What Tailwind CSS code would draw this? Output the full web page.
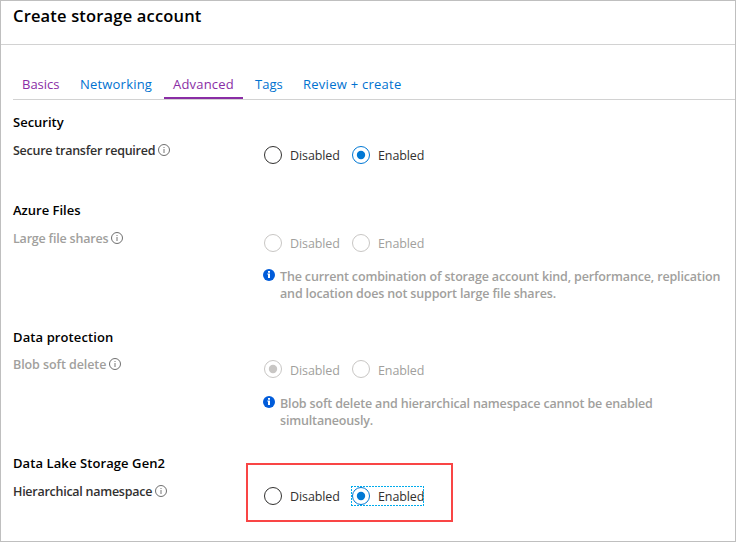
<!DOCTYPE html>
<html lang="en"><head><meta charset="utf-8"><title>Create storage account</title>
<script src="https://cdn.jsdelivr.net/npm/@tailwindcss/browser@4"></script></head>
<body class="bg-white">
<svg class="hidden"><defs>
<symbol id="info" viewBox="0 0 12 12"><circle cx="6" cy="6" r="5.5" fill="none" stroke="#555" stroke-width=".85"/><path d="M6 5v4M6 3v1" stroke="#666" stroke-width=".9"/></symbol>
<symbol id="notice" viewBox="0 0 12 12"><circle cx="6" cy="6" r="6" fill="#015cda"/><path d="M5 2h2v1.8H5zM4.3 4.6H7V9H5V5.6h-.7z" fill="#fff"/></symbol>
<symbol id="off" viewBox="0 0 18 18"><circle cx="9" cy="9" r="8.5" fill="none" stroke="currentColor"/></symbol>
<symbol id="on" viewBox="0 0 18 18"><circle cx="9" cy="9" r="8.5" fill="none" stroke="currentColor"/><circle cx="9" cy="9" r="4.2" fill="currentColor"/></symbol>
</defs></svg>
<main class="flex h-[542px] w-[736px] flex-col border border-[#bfbfbf] font-['Open_Sans','Noto_Sans',sans-serif] text-[12.5px] leading-[18px] whitespace-nowrap text-[#323130]">
<header class="flex h-[44px] shrink-0 items-start border-b border-[#d2d2d2] pt-[3px] pl-3"><h1 class="text-[16.5px] leading-6 font-semibold tracking-[0.17px] text-black">Create storage account</h1></header>
<nav class="mt-[23px] ml-3 flex h-[32px] shrink-0 border-b border-[#d2d2d2] text-[13px] text-[#0072d0]">
<a class="w-[67px] pt-[7px] pl-[9px] text-[#8a2da5]">Basics</a><a class="w-[84px] pt-[7px] tracking-[0.2px]">Networking</a><a class="w-[79px] border-b-2 border-[#8a2da5] pt-[7px] pl-[9px] tracking-[0.2px] text-[#8a2da5]">Advanced</a><a class="w-[60px] pt-[7px] pl-3">Tags</a><a class="pt-[7px] tracking-[0.26px]">Review + create</a>
</nav>

<section class="mt-[13px] ml-3 h-[88px] shrink-0">
<h2 class="text-[13px] font-semibold text-black">Security</h2>
<div class="flex items-start pt-[10px]">
<div class="flex w-[251px] items-center gap-[3px] font-semibold tracking-[-0.25px]"><span class="pt-px leading-[17px]">Secure transfer required</span><svg class="size-3"><use href="#info"/></svg></div>
<div class="flex gap-3 pt-[5px] tracking-[-0.1px]">
<label class="flex w-[76px] items-center gap-2"><svg class="size-[18px] shrink-0"><use href="#off"/></svg><span class="pt-[2px] leading-4">Disabled</span></label>
<label class="flex items-center gap-2"><svg class="size-[18px] shrink-0 text-[#0078d4]"><use href="#on"/></svg><span class="pt-[2px] leading-4">Enabled</span></label>
</div></div>
</section>

<section class="ml-3 h-[127px] shrink-0">
<h2 class="text-[13px] font-semibold text-black">Azure Files</h2>
<div class="flex items-start pt-[10px] text-[#a19f9d]">
<div class="flex w-[251px] items-center gap-[3px] font-semibold tracking-[-0.2px]"><span class="pt-px leading-[17px]">Large file shares</span><svg class="size-3"><use href="#info"/></svg></div>
<div class="flex gap-3 pt-[5px] tracking-[-0.1px]">
<label class="flex w-[76px] items-center gap-2"><svg class="size-[18px] shrink-0 text-[#c8c6c4]"><use href="#off"/></svg><span class="pt-[2px] leading-4">Disabled</span></label>
<label class="flex items-center gap-2"><svg class="size-[18px] shrink-0 text-[#c8c6c4]"><use href="#off"/></svg><span class="pt-[2px] leading-4">Enabled</span></label>
</div></div>
<div class="mt-[16px] ml-[250px] flex gap-[5px] leading-[17px] font-semibold tracking-[-0.155px] text-[#a19f9d]"><svg class="mt-px size-3 shrink-0"><use href="#notice"/></svg><p>The current combination of storage account kind, performance, replication<br>and location does not support large file shares.</p></div>
</section>

<section class="ml-3 h-[126px] shrink-0">
<h2 class="text-[13px] font-semibold tracking-[0.1px] text-black">Data protection</h2>
<div class="flex items-start pt-[9px] text-[#a19f9d]">
<div class="flex w-[251px] items-center gap-[3px] font-semibold tracking-[-0.08px]"><span class="pt-px leading-[17px]">Blob soft delete</span><svg class="size-3"><use href="#info"/></svg></div>
<div class="flex gap-3 pt-[5px] tracking-[-0.1px]">
<label class="flex w-[76px] items-center gap-2"><svg class="size-[18px] shrink-0 text-[#c8c6c4]"><use href="#on"/></svg><span class="pt-[4px] leading-[14px]">Disabled</span></label>
<label class="flex items-center gap-2"><svg class="size-[18px] shrink-0 text-[#c8c6c4]"><use href="#off"/></svg><span class="pt-[4px] leading-[14px]">Enabled</span></label>
</div></div>
<div class="mt-[17px] ml-[250px] flex gap-[5px] leading-[17px] font-semibold tracking-[-0.165px] text-[#a19f9d]"><svg class="mt-px size-3 shrink-0"><use href="#notice"/></svg><p>Blob soft delete and hierarchical namespace cannot be enabled<br>simultaneously.</p></div>
</section>

<section class="ml-3 shrink-0">
<h2 class="text-[13px] font-semibold tracking-[0.09px] text-black">Data Lake Storage Gen2</h2>
<div class="flex items-start pt-[10px]">
<div class="flex w-[251px] items-center gap-[3px] font-semibold tracking-[-0.26px]"><span class="pt-px leading-[17px]">Hierarchical namespace</span><svg class="size-3"><use href="#info"/></svg></div>
<div class="relative flex gap-3 pt-[5px] tracking-[-0.1px]">
<div class="absolute -top-[19px] -left-[18px] h-[59px] w-[207px] border-2 border-[#f94545]"></div>
<label class="flex w-[76px] items-center gap-2"><svg class="size-[18px] shrink-0"><use href="#off"/></svg><span class="pt-[2px] leading-4">Disabled</span></label>
<label class="relative flex items-center gap-2"><svg class="size-[18px] shrink-0 text-[#0078d4]"><use href="#on"/></svg><span class="pt-[2px] leading-4">Enabled</span><svg class="absolute -top-px -left-px h-5 w-[73px]" viewBox="0 0 73 20"><path d="M0 .5H73M0 19.5H73M.5 0V20M72.5 0V20" fill="none" stroke="#00abec" stroke-dasharray="2 1"/></svg></label>
</div></div>
</section>
</main>
</body></html>
